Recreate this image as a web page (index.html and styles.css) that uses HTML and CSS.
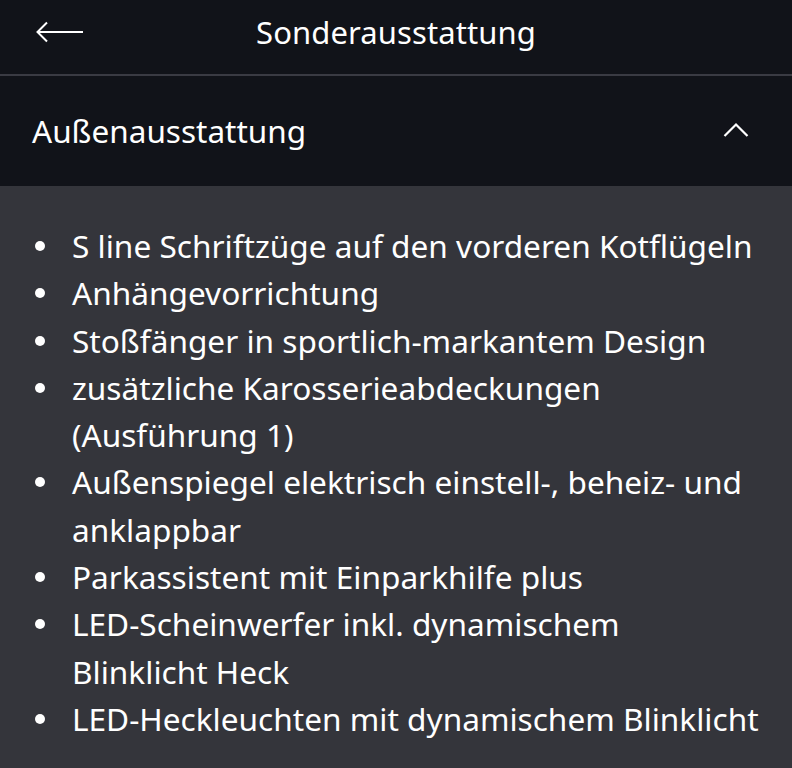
FILE: index.html
```html
<!DOCTYPE html>
<html lang="de">
<head>
<meta charset="utf-8">
<link rel="stylesheet" href="styles.css">
</head>
<body>
<header class="topbar">
  <button class="back" aria-label="Zurück">
    <svg width="48" height="22" viewBox="0 0 48 22"><path d="M11 1.5 L1.5 11 L11 20.5 M1.5 11 H47" fill="none" stroke="#fff" stroke-width="2"/></svg>
  </button>
  <h1 class="title">Sonderausstattung</h1>
</header>
<section class="acc-head">
  <h2 class="acc-title">Außenausstattung</h2>
  <svg class="chev" width="26" height="16" viewBox="0 0 26 16"><path d="M1.5 14 L13 2.5 L24.5 14" fill="none" stroke="#fff" stroke-width="2.2"/></svg>
</section>
<section class="acc-body">
  <ul class="list">
    <li>S line Schriftzüge auf den vorderen Kotflügeln</li>
    <li>Anhängevorrichtung</li>
    <li>Stoßfänger in sportlich-markantem Design</li>
    <li>zusätzliche Karosserieabdeckungen (Ausführung 1)</li>
    <li>Außenspiegel elektrisch einstell-, beheiz- und anklappbar</li>
    <li>Parkassistent mit Einparkhilfe plus</li>
    <li>LED-Scheinwerfer inkl. dynamischem Blinklicht Heck</li>
    <li>LED-Heckleuchten mit dynamischem Blinklicht</li>
  </ul>
</section>
</body>
</html>
```
FILE: styles.css
```css
html, body {
  margin: 0;
  padding: 0;
}
body {
  width: 792px;
  height: 768px;
  overflow: hidden;
  background: #34353b;
  color: #fff;
  font-family: "Noto Sans", "Open Sans", sans-serif;
}
.topbar {
  position: relative;
  height: 74px;
  background: #111319;
  border-bottom: 2px solid #3a3b43;
  display: flex;
  align-items: center;
  justify-content: center;
}
.back {
  position: absolute;
  left: 36px;
  top: 21px;
  background: none;
  border: 0;
  padding: 0;
  line-height: 0;
}
.title {
  margin: 0;
  font-size: 31px;
  font-weight: 400;
  letter-spacing: 0.1px;
  transform: translateY(-5px);
}
.acc-head {
  height: 110px;
  background: #111319;
  display: flex;
  align-items: center;
  justify-content: space-between;
  padding: 0 43px 0 32px;
}
.acc-title {
  margin: 0;
  font-size: 31.5px;
  font-weight: 400;
  transform: translateY(-1px);
}
.chev {
  transform: translateY(-1px);
}
.acc-body {
  padding: 36px 30px 0 72px;
}
.list {
  margin: 0;
  padding: 0;
  list-style: none;
}
.list li {
  position: relative;
  font-size: 31.6px;
  line-height: 47.3px;
}
.list li::before {
  content: "";
  position: absolute;
  left: -37px;
  top: 19px;
  width: 10px;
  height: 10px;
  border-radius: 50%;
  background: #fff;
}
```
